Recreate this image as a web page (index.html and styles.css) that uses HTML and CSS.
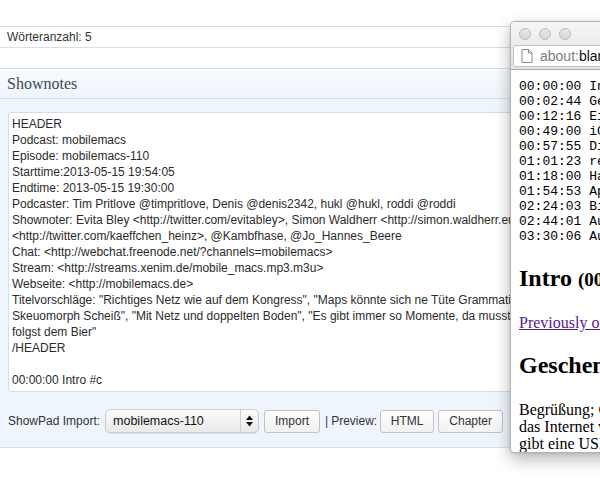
FILE: index.html
```html
<!DOCTYPE html>
<html lang="de">
<head>
<meta charset="utf-8">
<title>Shownotes</title>
<link rel="stylesheet" href="styles.css">
</head>
<body>
<div class="page">
  <div class="wordcount">Wörteranzahl: 5</div>
  <div class="postbox">
    <h3 class="postbox-title">Shownotes</h3>
    <div class="postbox-inside">
      <textarea class="notes" wrap="off" readonly>HEADER
Podcast: mobilemacs
Episode: mobilemacs-110
Starttime:2013-05-15 19:54:05
Endtime: 2013-05-15 19:30:00
Podcaster: Tim Pritlove @timpritlove, Denis @denis2342, hukl @hukl, roddi @roddi
Shownoter: Evita Bley &lt;http://twitter.com/evitabley&gt;, Simon Waldherr &lt;http://simon.waldherr.eu&gt;, Kaeffchen Heinz
&lt;http://twitter.com/kaeffchen_heinz&gt;, @Kambfhase, @Jo_Hannes_Beere
Chat: &lt;http://webchat.freenode.net/?channels=mobilemacs&gt;
Stream: &lt;http://streams.xenim.de/mobile_macs.mp3.m3u&gt;
Webseite: &lt;http://mobilemacs.de&gt;
Titelvorschläge: "Richtiges Netz wie auf dem Kongress", "Maps könnte sich ne Tüte Grammatik kaufen", "Das ist
Skeuomorph Scheiß", "Mit Netz und doppelten Boden", "Es gibt immer so Momente, da musst du einfach und du
folgst dem Bier"
/HEADER

00:00:00 Intro #c</textarea>
      <div class="controls">
        <span class="label">ShowPad Import:</span>
        <div class="select">
          <span class="select-value">mobilemacs-110</span>
          <span class="select-arrows">
            <svg width="7" height="12" viewBox="0 0 7 12"><path d="M3.5 0.5 L7 5 L0 5 Z M0 7 L7 7 L3.5 11.5 Z" fill="#111"/></svg>
          </span>
        </div>
        <button class="btn btn-import">Import</button>
        <span class="sep">|</span><span class="label">Preview:</span>
        <button class="btn btn-html">HTML</button>
        <button class="btn btn-chapter">Chapter</button>
      </div>
    </div>
  </div>
</div>

<div class="popup">
  <div class="titlebar">
    <span class="light"></span><span class="light"></span><span class="light"></span>
  </div>
  <div class="toolbar">
    <div class="address">
      <svg class="doc" width="12" height="14" viewBox="0 0 12 14"><path d="M1 0.5 H7.5 L11 4 V13.5 H1 Z" fill="#fff" stroke="#8a8a8a"/><path d="M7.5 0.5 V4 H11" fill="none" stroke="#8a8a8a"/></svg>
      <span class="scheme">about:</span><span class="host">blank</span>
    </div>
  </div>
  <div class="doc-content">
<pre class="chapters">00:00:00 Intro
00:02:44 Geschenke
00:12:16 Einkauf
00:49:00 iOS
00:57:55 Dies und das
01:01:23 retina
01:18:00 Hardware
01:54:53 Apps
02:24:03 Bier
02:44:01 Ausblick
03:30:06 Ausklang</pre>
    <h2 class="doc-h2">Intro <span class="time">(00:00:00)</span></h2>
    <p class="doc-p"><a class="doc-link" href="#">Previously on mobilemacs</a></p>
    <h2 class="doc-h2">Geschenke <span class="time">(00:02:44)</span></h2>
    <p class="doc-p">Begrüßung; Geschenke für die Hörer<br>das Internet vergisst nichts<br>gibt eine USB Version</p>
  </div>
</div>
</body>
</html>
```

FILE: styles.css
```css
html, body {
  margin: 0;
  padding: 0;
  width: 600px;
  height: 500px;
  overflow: hidden;
  background: #fff;
}

body {
  position: relative;
  font-family: "Liberation Sans", Arial, sans-serif;
  font-size: 12px;
  color: #333;
}

.page {
  padding-top: 26px;
}

.wordcount {
  height: 20px;
  line-height: 20px;
  padding-left: 7px;
  border-top: 1px solid #d1e2ed;
  border-bottom: 1px solid #d1e2ed;
  color: #333;
}

.postbox {
  margin-top: 20px;
  border-top: 1px solid #cfe1ec;
  border-bottom: 1px solid #cfe1ec;
  background: #eef5fc;
}

.postbox-title {
  margin: 0;
  height: 29px;
  line-height: 30px;
  padding-left: 7px;
  font-family: "Liberation Serif", "DejaVu Serif", serif;
  font-size: 16px;
  font-weight: normal;
  color: #3f4a52;
  border-bottom: 1px solid #cfe1ec;
  background: linear-gradient(#f9fbfd, #edf5fb);
}

.postbox-inside {
  padding: 13px 8px 14px 8px;
}

.notes {
  display: block;
  box-sizing: border-box;
  width: 100%;
  height: 280px;
  margin: 0;
  padding: 3px 4px 2px 3px;
  border: 1px solid #cde0ec;
  border-radius: 3px;
  background: #fff;
  font-family: "Liberation Sans", Arial, sans-serif;
  font-size: 12px;
  line-height: 16px;
  color: #2b2b2b;
  white-space: pre;
  overflow: hidden;
  resize: none;
  outline: none;
}

.controls {
  display: flex;
  align-items: center;
  height: 24px;
  margin-top: 17px;
}

.label {
  color: #333;
  white-space: nowrap;
}

.select {
  box-sizing: border-box;
  display: flex;
  align-items: stretch;
  width: 154px;
  height: 24px;
  margin-left: 5px;
  border: 1px solid #c9cdd0;
  border-radius: 5px;
  background: linear-gradient(#fbfbfb, #e9e9e9);
  box-shadow: 0 1px 1px rgba(0, 0, 0, 0.08);
}

.select-value {
  flex: 1;
  padding-left: 7px;
  line-height: 22px;
  font-size: 12.5px;
  color: #111;
}

.select-arrows {
  width: 17px;
  display: flex;
  align-items: center;
  justify-content: center;
  border-left: 1px solid #cfcfcf;
}

.btn {
  box-sizing: border-box;
  height: 23px;
  margin: 0;
  padding: 0;
  border: 1px solid #c2c2c2;
  border-radius: 3px;
  background: linear-gradient(#fefefe, #f1f1f1);
  font-family: "Liberation Sans", Arial, sans-serif;
  font-size: 12px;
  color: #333;
}

.btn-import {
  width: 56px;
  margin-left: 5px;
}

.sep {
  margin-left: 5px;
  margin-right: 3px;
  color: #23399a;
}

.btn-html {
  width: 54px;
  margin-left: 3px;
}

.btn-chapter {
  width: 65px;
  margin-left: 4px;
}

/* Popup browser window */
.popup {
  position: absolute;
  left: 510px;
  top: 21px;
  width: 160px;
  height: 432px;
  box-sizing: border-box;
  border: 1px solid #b4b4b4;
  border-radius: 5px 5px 4px 4px;
  background: #fff;
  box-shadow: 0 6px 16px rgba(0, 0, 0, 0.3), 0 0 2px rgba(0, 0, 0, 0.15);
  overflow: hidden;
}

.titlebar {
  height: 23px;
  display: flex;
  align-items: center;
  gap: 8px;
  padding-left: 8px;
  background: linear-gradient(#f6f6f6, #ececec);
}

.light {
  box-sizing: border-box;
  width: 12px;
  height: 12px;
  border-radius: 50%;
  border: 1px solid #bdbdbd;
  background: linear-gradient(#e6e6e6, #d8d8d8);
}

.toolbar {
  height: 24px;
  padding-left: 1px;
  background: linear-gradient(#ececec, #e2e2e2);
  border-bottom: 1px solid #a9a9a9;
}

.address {
  box-sizing: border-box;
  display: flex;
  align-items: center;
  height: 22px;
  margin-left: 1px;
  padding-left: 7px;
  border: 1px solid #c3c3c3;
  border-radius: 3px;
  background: #fff;
  font-family: "Liberation Sans", Arial, sans-serif;
  font-size: 14px;
  white-space: nowrap;
}

.doc {
  margin-right: 7px;
}

.scheme {
  color: #7b7b7b;
}

.host {
  color: #111;
}

.doc-content {
  padding: 9px 0 0 8px;
  font-family: "Liberation Serif", "Times New Roman", serif;
  font-size: 16px;
  color: #000;
  white-space: nowrap;
}

.chapters {
  margin: 0;
  font-family: "Liberation Mono", "Courier New", monospace;
  font-size: 13px;
  line-height: 15px;
  color: #000;
}

.doc-h2 {
  margin: 20px 0;
  font-size: 24px;
  line-height: 28px;
  font-weight: bold;
}

.time {
  font-size: 19px;
}

.doc-p {
  margin: 16px 0;
  line-height: 17px;
}

.doc-link {
  color: #551a8b;
  text-decoration: underline;
}
```
